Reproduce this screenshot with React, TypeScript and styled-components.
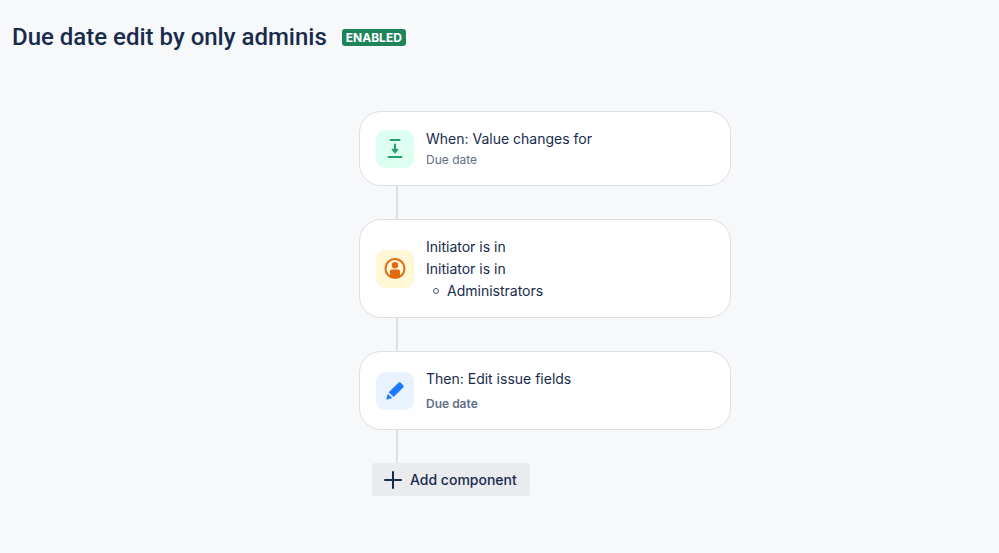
import React from 'react';
import styled, { createGlobalStyle } from 'styled-components';

const GlobalStyle = createGlobalStyle`
  *, *::before, *::after { box-sizing: border-box; }
  body {
    margin: 0;
    background: #f7f8fa;
    color: #172b4d;
    font-family: Inter, "Liberation Sans", sans-serif;
  }
`;

const Page = styled.div`
  min-height: 100vh;
  padding: 20px 0;
`;

const Header = styled.header`
  display: flex;
  align-items: center;
  gap: 15px;
  padding: 0 12px;
`;

const Title = styled.h1`
  margin: 0;
  font-family: Roboto, "Liberation Sans", sans-serif;
  font-size: 24px;
  line-height: 34px;
  font-weight: 500;
`;

const Status = styled.span`
  padding: 0 4px;
  border-radius: 3px;
  background: #1f845a;
  color: #fff;
  font-size: 12px;
  line-height: 17px;
  font-weight: 700;
`;

const Flow = styled.main`
  display: flex;
  justify-content: center;
  padding: 57px 0 0 91px;
`;

const Chain = styled.ol`
  width: 100%;
  max-width: 372px;
  margin: 0;
  padding: 0;
  list-style: none;
`;

const Step = styled.li`
  &:not(:last-child)::after {
    content: '';
    display: block;
    width: 2px;
    height: 33px;
    margin-left: 37px;
    background: #dcdfe4;
  }
`;

const Card = styled.article`
  display: flex;
  align-items: center;
  gap: 12px;
  padding: 16px;
  border: 1px solid #dcdfe4;
  border-radius: 22px;
  background: #fff;
`;

const IconTile = styled.span<{ $fill: string }>`
  display: flex;
  flex: none;
  width: 38px;
  height: 38px;
  border-radius: 9px;
  background: ${(p) => p.$fill};
`;

const Details = styled.div<{ $gap?: number }>`
  display: flex;
  flex-direction: column;
  gap: ${(p) => p.$gap ?? 0}px;
`;

const Heading = styled.h2`
  margin: 0;
  font-size: 14px;
  line-height: 22px;
  font-weight: 400;
`;

const Text = styled.p`
  margin: 0;
  font-size: 14px;
  line-height: 22px;
`;

const Field = styled.p<{ $strong?: boolean }>`
  margin: 0;
  color: #626f86;
  font-size: 12px;
  line-height: 19px;
  font-weight: ${(p) => (p.$strong ? 600 : 400)};
`;

const Groups = styled.ul`
  margin: 0;
  padding: 0 0 0 7px;
  list-style: none;
`;

const Group = styled.li`
  display: flex;
  align-items: center;
  gap: 8px;
  font-size: 14px;
  line-height: 21px;

  &::before {
    content: '';
    width: 6px;
    height: 6px;
    border: 1px solid #44546f;
    border-radius: 50%;
  }
`;

const AddButton = styled.button`
  display: flex;
  align-items: center;
  gap: 7px;
  height: 33px;
  margin-left: 13px;
  padding: 0 13px 0 11px;
  border: 0;
  border-radius: 3px;
  background: #e9ebee;
  color: #172b4d;
  font: 500 14px/20px Inter, "Liberation Sans", sans-serif;
  cursor: pointer;
`;

const TriggerIcon = () => (
  <svg width="38" height="38" viewBox="0 0 38 38" aria-hidden="true">
    <g stroke="#22a06b" strokeWidth="2" strokeLinecap="round" fill="none">
      <path d="M14.5 10h9M12.5 27h13M19 14.5v6" />
    </g>
    <path d="M16.1 18.8h5.8a.6.6 0 0 1 .4 1L19.5 23.3a.7.7 0 0 1-1 0L15.7 19.8a.6.6 0 0 1 .4-1z" fill="#22a06b" />
  </svg>
);

const PersonIcon = () => (
  <svg width="38" height="38" viewBox="0 0 38 38" aria-hidden="true">
    <circle cx="19" cy="18.5" r="9.5" fill="none" stroke="#e56910" strokeWidth="2" />
    <circle cx="19" cy="15.3" r="3.2" fill="#e56910" />
    <path d="M14 21.3a1.7 1.7 0 0 1 1.7-1.7h6.6a1.7 1.7 0 0 1 1.7 1.7v4.500a9 9 0 0 1-10 0z" fill="#e56910" />
  </svg>
);

const PencilIcon = () => (
  <svg width="38" height="38" viewBox="0 0 38 38" aria-hidden="true">
    <g fill="#1d7afc">
      <path d="M12.7 20.3 22.2 10.900a2 2 0 0 1 2.8 0l2 2a2 2 0 0 1 0 2.8L17.6 25.100z" />
      <path d="M11.800 21.8 16.2 26.1l-4.6 1.4a.9.9 0 0 1-1.100-1.100z" />
    </g>
  </svg>
);

const PlusIcon = () => (
  <svg width="20" height="20" viewBox="0 0 20 20" aria-hidden="true">
    <path d="M10 2v16M2 10h16" stroke="#172b4d" strokeWidth="2" strokeLinecap="round" />
  </svg>
);

export default function App() {
  return (
    <>
      <GlobalStyle />
      <Page>
        <Header>
          <Title>Due date edit by only adminis</Title>
          <Status>ENABLED</Status>
        </Header>
        <Flow>
          <Chain>
            <Step>
              <Card>
                <IconTile $fill="#dcfff1"><TriggerIcon /></IconTile>
                <Details>
                  <Heading>When: Value changes for</Heading>
                  <Field>Due date</Field>
                </Details>
              </Card>
            </Step>
            <Step>
              <Card>
                <IconTile $fill="#fff7d6"><PersonIcon /></IconTile>
                <Details>
                  <Heading>Initiator is in</Heading>
                  <Text>Initiator is in</Text>
                  <Groups>
                    <Group>Administrators</Group>
                  </Groups>
                </Details>
              </Card>
            </Step>
            <Step>
              <Card>
                <IconTile $fill="#e9f2ff"><PencilIcon /></IconTile>
                <Details $gap={4}>
                  <Heading>Then: Edit issue fields</Heading>
                  <Field $strong>Due date</Field>
                </Details>
              </Card>
            </Step>
            <Step>
              <AddButton type="button">
                <PlusIcon />
                Add component
              </AddButton>
            </Step>
          </Chain>
        </Flow>
      </Page>
    </>
  );
}
